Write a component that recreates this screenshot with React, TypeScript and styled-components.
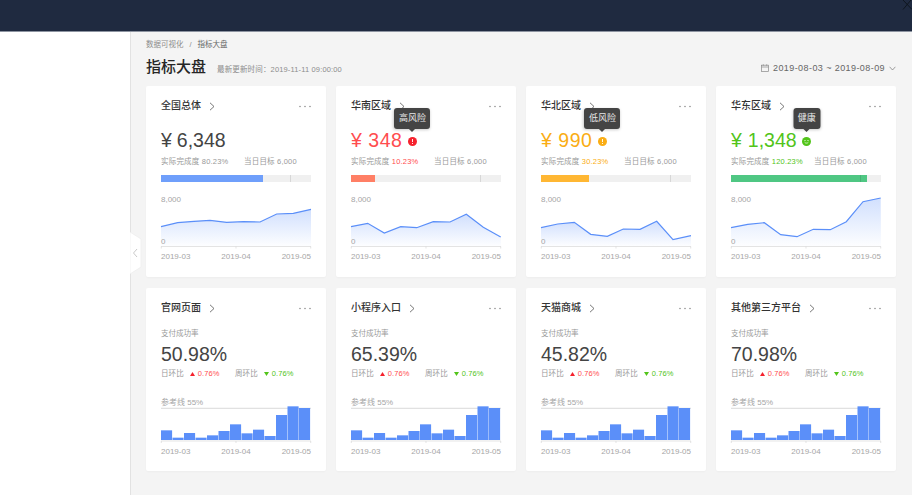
import React from "react";
import styled, { createGlobalStyle } from "styled-components";

const FONT = `"Liberation Sans", "Noto Sans CJK SC", sans-serif`;

const Global = createGlobalStyle`
  html, body { margin: 0; padding: 0; background: #fff; }
  #root { width: 912px; height: 495px; overflow: hidden; }
  * { box-sizing: border-box; }
  body { font-family: ${FONT}; }
`;

const Page = styled.div`
  position: relative;
  width: 912px;
  height: 495px;
  display: flex;
  flex-direction: column;
  overflow: hidden;
`;
const TopBar = styled.header`
  height: 32px;
  flex: none;
  background: #1f2a40;
  border-bottom: 1px solid #8d94a1;
`;
const CloseMark = styled.svg`
  position: absolute;
  right: 0;
  top: 0;
  width: 10px;
  height: 10px;
`;
const Body = styled.div`
  flex: 1;
  display: flex;
  min-height: 0;
`;
const Sidebar = styled.aside`
  position: relative;
  width: 131px;
  flex: none;
  background: #fff;
  border-right: 1px solid #e2e2e2;
`;
const Handle = styled.svg`
  position: absolute;
  left: 130px;
  top: 200px;
  width: 12px;
  height: 42px;
`;
const Main = styled.main`
  flex: 1;
  background: #f4f4f4;
  padding: 8px 0 0 15px;
`;
const Crumbs = styled.div`
  display: flex;
  gap: 6px;
  height: 10px;
  line-height: 10px;
  font-size: 7.5px;
  color: #8c8c8c;
`;
const CrumbNow = styled.span`
  color: #666;
`;
const HeadRow = styled.div`
  display: flex;
  align-items: center;
  height: 22px;
  margin-top: 6px;
  padding-right: 16px;
`;
const PageTitle = styled.h1`
  margin: 0;
  font-size: 15px;
  font-weight: 500;
  color: #262626;
  line-height: 22px;
`;
const Updated = styled.span`
  margin-left: 11px;
  margin-top: 3px;
  font-size: 7.5px;
  letter-spacing: 0.15px;
  color: #8c8c8c;
`;
const DateRange = styled.div`
  margin-left: auto;
  margin-top: 2px;
  display: flex;
  align-items: center;
  gap: 4px;
  font-size: 9px;
  letter-spacing: 0.42px;
  color: #666;
`;
const Grid = styled.div`
  display: grid;
  grid-template-columns: repeat(4, 180px);
  grid-template-rows: 191px 183px;
  gap: 11px 10px;
  margin-top: 8px;
`;
const Card = styled.section`
  background: #fff;
  border-radius: 2px;
  padding: 14px 15px 0;
  box-shadow: 0 1px 2px rgba(0, 0, 0, 0.03);
`;
const CardHead = styled.div`
  display: flex;
  align-items: center;
  height: 12px;
`;
const CardTitle = styled.h2`
  margin: 0;
  font-size: 10px;
  font-weight: 500;
  color: #333;
  line-height: 12px;
`;
const Chevron = styled.svg`
  margin-left: 8px;
  width: 6px;
  height: 9px;
`;
const More = styled.svg`
  margin-left: auto;
  width: 12px;
  height: 3px;
`;
const ValueRow = styled.div<{ $color: string }>`
  display: flex;
  align-items: center;
  height: 24px;
  margin-top: 16px;
  font-size: 19.5px;
  color: ${(p) => p.$color};
  white-space: pre;
`;
const Yen = styled.span<{ $gap: number }>`
  margin-right: ${(p) => p.$gap}px;
`;
const Amount = styled.span<{ $track: number }>`
  letter-spacing: ${(p) => p.$track}px;
`;
const StatusWrap = styled.span`
  position: relative;
  display: inline-flex;
  margin-left: 5.5px;
  margin-top: 2px;
`;
const Tooltip = styled.span`
  position: absolute;
  left: 50%;
  bottom: 17px;
  transform: translateX(-50%);
  padding: 0 4.5px;
  height: 20.5px;
  line-height: 20.5px;
  background: #444;
  color: #e8e8e8;
  font-size: 9px;
  border-radius: 3px;
  white-space: nowrap;
  box-shadow: 0 1px 3px rgba(0, 0, 0, 0.2);
  &::after {
    content: "";
    position: absolute;
    left: 50%;
    bottom: -2px;
    width: 5px;
    height: 5px;
    background: #444;
    transform: translateX(-50%) rotate(45deg);
  }
`;
const Meta = styled.div`
  display: flex;
  height: 10px;
  line-height: 10px;
  margin-top: 5px;
  font-size: 7.5px;
  letter-spacing: 0.2px;
  color: #999;
  white-space: pre;
`;
const MetaCell = styled.span<{ $w: number }>`
  width: ${(p) => p.$w}px;
`;
const Accent = styled.span<{ $color: string }>`
  color: ${(p) => p.$color};
`;
const Track = styled.div`
  position: relative;
  height: 7px;
  margin-top: 8px;
  background: #f0f0f0;
`;
const Fill = styled.div<{ $color: string }>`
  height: 100%;
  background: ${(p) => p.$color};
`;
const Target = styled.div`
  position: absolute;
  left: 129px;
  top: 0;
  bottom: 0;
  width: 1px;
  background: rgba(0, 0, 0, 0.1);
`;
const ChartSvg = styled.svg`
  display: block;
  margin-top: 8px;
  width: 150px;
  height: 72px;
  overflow: visible;
`;
const BarSvg = styled(ChartSvg)`
  margin-top: 16px;
  height: 65px;
`;
const AxisText = styled.text`
  font-family: ${FONT};
  font-size: 8px;
  fill: #a6a6a6;
  dominant-baseline: central;
`;
const SubLabel = styled.div`
  height: 10px;
  line-height: 10px;
  margin-top: 15px;
  font-size: 7.5px;
  color: #999;
`;
const Rate = styled.div`
  height: 24px;
  line-height: 24px;
  margin-top: 3px;
  font-size: 19.5px;
  color: #444;
`;
const CompareRow = styled.div`
  display: flex;
  height: 10px;
  line-height: 10px;
  margin-top: 3px;
  font-size: 7.5px;
  letter-spacing: 0.1px;
  color: #999;
`;
const CompareCell = styled.span`
  display: flex;
  align-items: center;
  width: 74px;
`;
const Tri = styled.svg`
  width: 5px;
  height: 4px;
  margin: 0 3px 0 6px;
`;

const toY = (z: number) => z / 3 - 30;
const regions = [
  {
    title: "全国总体", amount: "6,348", gap: 5, track: 0, color: "#444", rate: "80.23%", rateColor: "#999", fill: "#6f9ffb", w: 101.5, tip: "", dot: "",
    xs: [93, 143, 192, 240, 290, 340, 390, 440, 490, 543], x0: 93,
    ys: [200, 188, 184, 181, 187, 185, 186, 162, 160, 148],
  },
  {
    title: "华南区域", amount: "348", gap: 6.5, track: 0.5, color: "#ff4d4f", rate: "10.23%", rateColor: "#ff4d4f", fill: "#ff7f65", w: 24, tip: "高风险", dot: "high",
    xs: [48, 98, 148, 197, 245, 295, 345, 394, 445, 497], x0: 48,
    ys: [200, 190, 219, 200, 203, 185, 186, 163, 202, 231],
  },
  {
    title: "华北区域", amount: "990", gap: 6.5, track: 0.5, color: "#faad14", rate: "30.23%", rateColor: "#faad14", fill: "#ffb733", w: 48, tip: "低风险", dot: "low",
    xs: [33, 83, 133, 182, 232, 280, 330, 380, 429, 483], x0: 33,
    ys: [203, 192, 187, 223, 229, 207, 208, 184, 239, 227],
  },
  {
    title: "华东区域", amount: "1,348", gap: 6, track: 0, color: "#52c41a", rate: "120.23%", rateColor: "#52c41a", fill: "#4fc783", w: 136, tip: "健康", dot: "ok",
    xs: [48, 98, 148, 197, 246, 295, 346, 394, 444, 497], x0: 48,
    ys: [203, 193, 188, 224, 230, 208, 209, 185, 125, 114],
  },
];
const channels = [
  { title: "官网页面", rate: "50.98%" },
  { title: "小程序入口", rate: "65.39%" },
  { title: "天猫商城", rate: "45.82%" },
  { title: "其他第三方平台", rate: "70.98%" },
];
const barTops = [421, 443, 429, 443, 436, 423, 403, 430, 419, 438, 375, 349, 354];

const HeadBar = ({ title }: { title: string }) => (
  <CardHead>
    <CardTitle>{title}</CardTitle>
    <Chevron viewBox="0 0 6 9">
      <path d="M1 .8 5 4.5 1 8.2" fill="none" stroke="#555" strokeWidth="0.8" />
    </Chevron>
    <More viewBox="0 0 12 3">
      <circle cx="1" cy="1.5" r="0.7" fill="#777" />
      <circle cx="6" cy="1.5" r="0.7" fill="#777" />
      <circle cx="11" cy="1.5" r="0.7" fill="#777" />
    </More>
  </CardHead>
);

const StatusDot = ({ kind, color }: { kind: string; color: string }) => (
  <svg width="9" height="9" viewBox="0 0 9 9">
    <circle cx="4.5" cy="4.5" r="4.5" fill={kind === "high" ? "#f5222d" : color} />
    {kind === "ok" ? (
      <>
        <circle cx="3" cy="3.5" r="0.6" fill="#fff" />
        <circle cx="6" cy="3.5" r="0.6" fill="#fff" />
        <path d="M2.6 5.2c.8 1.2 3 1.2 3.8 0" stroke="#fff" strokeWidth="0.7" fill="none" />
      </>
    ) : (
      <path d="M4.5 2v3M4.5 6v1" stroke="#fff" strokeWidth="0.9" />
    )}
  </svg>
);

const DateTicks = ({ y }: { y: number }) => (
  <>
    <line x1="0" x2="150" y1={y} y2={y} stroke="#d9d9d9" strokeWidth="0.7" />
    {[0.3, 75, 149.7].map((x) => (
      <line key={x} x1={x} x2={x} y1={y} y2={y + 2} stroke="#d9d9d9" strokeWidth="0.7" />
    ))}
    <AxisText x="0" y={y + 10}>2019-03</AxisText>
    <AxisText x="75" y={y + 10} textAnchor="middle">2019-04</AxisText>
    <AxisText x="150" y={y + 10} textAnchor="end">2019-05</AxisText>
  </>
);

export default function App() {
  return (
    <Page>
      <Global />
      <TopBar />
      <CloseMark viewBox="0 0 10 10">
        <path d="M1 0 10 9.5M9 0 1 9.5" stroke="#0f141c" strokeWidth="0.9" fill="none" />
      </CloseMark>
      <Body>
        <Sidebar>
          <Handle viewBox="0 0 12 42">
            <path d="M0 0 11 7V35L0 42Z" fill="#fff" stroke="#ececec" strokeWidth="0.7" />
            <path d="M7 17 3.5 21 7 25" fill="none" stroke="#bbb" strokeWidth="0.8" />
          </Handle>
        </Sidebar>
        <Main>
          <Crumbs>
            <span>数据可视化</span>
            <span>/</span>
            <CrumbNow>指标大盘</CrumbNow>
          </Crumbs>
          <HeadRow>
            <PageTitle>指标大盘</PageTitle>
            <Updated>最新更新时间：2019-11-11 09:00:00</Updated>
            <DateRange>
              <svg width="8" height="8" viewBox="0 0 8 8" fill="none" stroke="#888" strokeWidth="0.7">
                <rect x="0.6" y="1.2" width="6.8" height="6.2" />
                <path d="M.6 3h6.8M2.3.3v1.4M5.7.3v1.4" />
              </svg>
              <span>2019-08-03 ~ 2019-08-09</span>
              <svg width="7" height="5" viewBox="0 0 7 5" fill="none" stroke="#777" strokeWidth="0.7">
                <path d="M.6.8 3.5 4 6.4.8" />
              </svg>
            </DateRange>
          </HeadRow>
          <Grid>
            {regions.map((r) => {
              const pts = r.xs.map((x, i) => `${((x - r.x0) / 3).toFixed(1)},${toY(r.ys[i]).toFixed(1)}`);
              const id = `area-${r.x0}-${r.ys[0]}-${r.ys[9]}`;
              return (
                <Card key={r.title}>
                  <HeadBar title={r.title} />
                  <ValueRow $color={r.color}>
                    <Yen $gap={r.gap}>¥</Yen>
                    <Amount $track={r.track}>{r.amount}</Amount>
                    {r.dot && (
                      <StatusWrap>
                        <StatusDot kind={r.dot} color={r.color} />
                        <Tooltip>{r.tip}</Tooltip>
                      </StatusWrap>
                    )}
                  </ValueRow>
                  <Meta>
                    <MetaCell $w={83}>
                      实际完成度 <Accent $color={r.rateColor}>{r.rate}</Accent>
                    </MetaCell>
                    <span>当日目标 6,000</span>
                  </Meta>
                  <Track>
                    <Fill $color={r.fill} style={{ width: r.w }} />
                    <Target />
                  </Track>
                  <ChartSvg viewBox="0 0 150 72">
                    <defs>
                      <linearGradient id={id} x1="0" y1="0" x2="0" y2="1">
                        <stop offset="0" stopColor="#5b8ff9" stopOpacity="0.28" />
                        <stop offset="1" stopColor="#5b8ff9" stopOpacity="0.01" />
                      </linearGradient>
                    </defs>
                    <polygon points={`0,56.5 ${pts.join(" ")} 150,56.5`} fill={`url(#${id})`} />
                    <polyline points={pts.join(" ")} fill="none" stroke="#5b8ff9" strokeWidth="1.2" />
                    <AxisText x="0" y="9.3">8,000</AxisText>
                    <AxisText x="0" y="51.7">0</AxisText>
                    <DateTicks y={56.5} />
                  </ChartSvg>
                </Card>
              );
            })}
            {channels.map((c) => (
              <Card key={c.title}>
                <HeadBar title={c.title} />
                <SubLabel>支付成功率</SubLabel>
                <Rate>{c.rate}</Rate>
                <CompareRow>
                  <CompareCell>
                    日环比
                    <Tri viewBox="0 0 5 4"><path d="M2.5 0 5 4H0Z" fill="#f5222d" /></Tri>
                    <Accent $color="#ff4d4f">0.76%</Accent>
                  </CompareCell>
                  <CompareCell>
                    周环比
                    <Tri viewBox="0 0 5 4"><path d="M0 0H5L2.5 4Z" fill="#52c41a" /></Tri>
                    <Accent $color="#52c41a">0.76%</Accent>
                  </CompareCell>
                </CompareRow>
                <BarSvg viewBox="0 0 150 65">
                  <AxisText x="0" y="7">参考线 55%</AxisText>
                  <line x1="0" x2="150" y1="13.3" y2="13.3" stroke="#c8c8c8" strokeWidth="0.7" />
                  {barTops.map((t, i) => (
                    <rect key={i} x={i * 11.5} y={t / 3 - 105} width={11.1} height={45 - (t / 3 - 105)} fill="#5b8ff9" />
                  ))}
                  <DateTicks y={46} />
                </BarSvg>
              </Card>
            ))}
          </Grid>
        </Main>
      </Body>
    </Page>
  );
}
